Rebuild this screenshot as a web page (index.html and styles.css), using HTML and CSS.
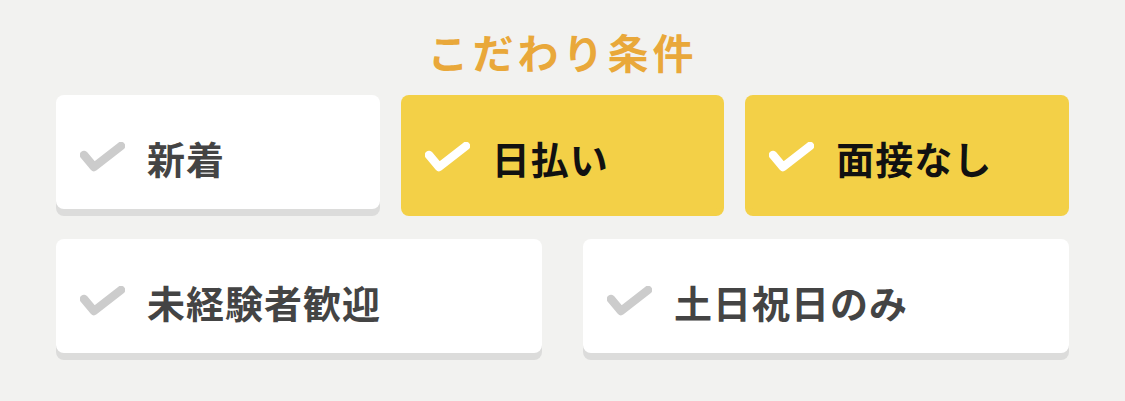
FILE: index.html
```html
<!DOCTYPE html>
<html lang="ja">
<head>
<meta charset="utf-8">
<title>こだわり条件</title>
<link rel="stylesheet" href="styles.css">
</head>
<body>
<section class="panel">
  <h2 class="title">こだわり条件</h2>
  <div class="row row-3">
    <div class="card">
      <svg class="check" viewBox="0 0 45 30"><path d="M4 13 L14 25 L41 4"/></svg>
      <span class="label">新着</span>
    </div>
    <div class="card on">
      <svg class="check" viewBox="0 0 45 30"><path d="M4 13 L14 25 L41 4"/></svg>
      <span class="label">日払い</span>
    </div>
    <div class="card on">
      <svg class="check" viewBox="0 0 45 30"><path d="M4 13 L14 25 L41 4"/></svg>
      <span class="label">面接なし</span>
    </div>
  </div>
  <div class="row row-2">
    <div class="card">
      <svg class="check" viewBox="0 0 45 30"><path d="M4 13 L14 25 L41 4"/></svg>
      <span class="label">未経験者歓迎</span>
    </div>
    <div class="card">
      <svg class="check" viewBox="0 0 45 30"><path d="M4 13 L14 25 L41 4"/></svg>
      <span class="label">土日祝日のみ</span>
    </div>
  </div>
</section>
</body>
</html>
```
FILE: styles.css
```css
html, body {
  margin: 0;
  padding: 0;
  background: #f2f2f0;
}
.panel {
  padding: 26px 56px 40px;
  font-family: "Noto Sans CJK JP", "Noto Sans", sans-serif;
}
.title {
  margin: 0;
  text-align: center;
  color: #e9a83a;
  font-size: 41px;
  font-weight: 700;
  letter-spacing: 4px;
  line-height: 50px;
  height: 69px;
}
.row {
  display: flex;
}
.row-3 {
  gap: 21px;
  margin-bottom: 30px;
}
.row-2 {
  gap: 41px;
}
.card {
  flex: 1;
  height: 104px;
  padding-top: 10px;
  display: flex;
  align-items: center;
  padding-left: 24px;
  background: #fff;
  border-radius: 8px;
  box-shadow: 0 7px 0 #dcdcdb;
}
.card.on {
  background: #f3d047;
  box-shadow: 0 7px 0 #f3d047;
}
.check {
  width: 45px;
  height: 30px;
  flex: none;
}
.check path {
  fill: none;
  stroke: #cccccc;
  stroke-width: 8.5;
  stroke-linecap: round;
  stroke-linejoin: round;
}
.card.on .check path {
  stroke: #ffffff;
}
.label {
  margin-left: 22px;
  font-size: 38px;
  font-weight: 700;
  letter-spacing: 1px;
  color: #444444;
}
.card.on .label {
  color: #111111;
}
```
